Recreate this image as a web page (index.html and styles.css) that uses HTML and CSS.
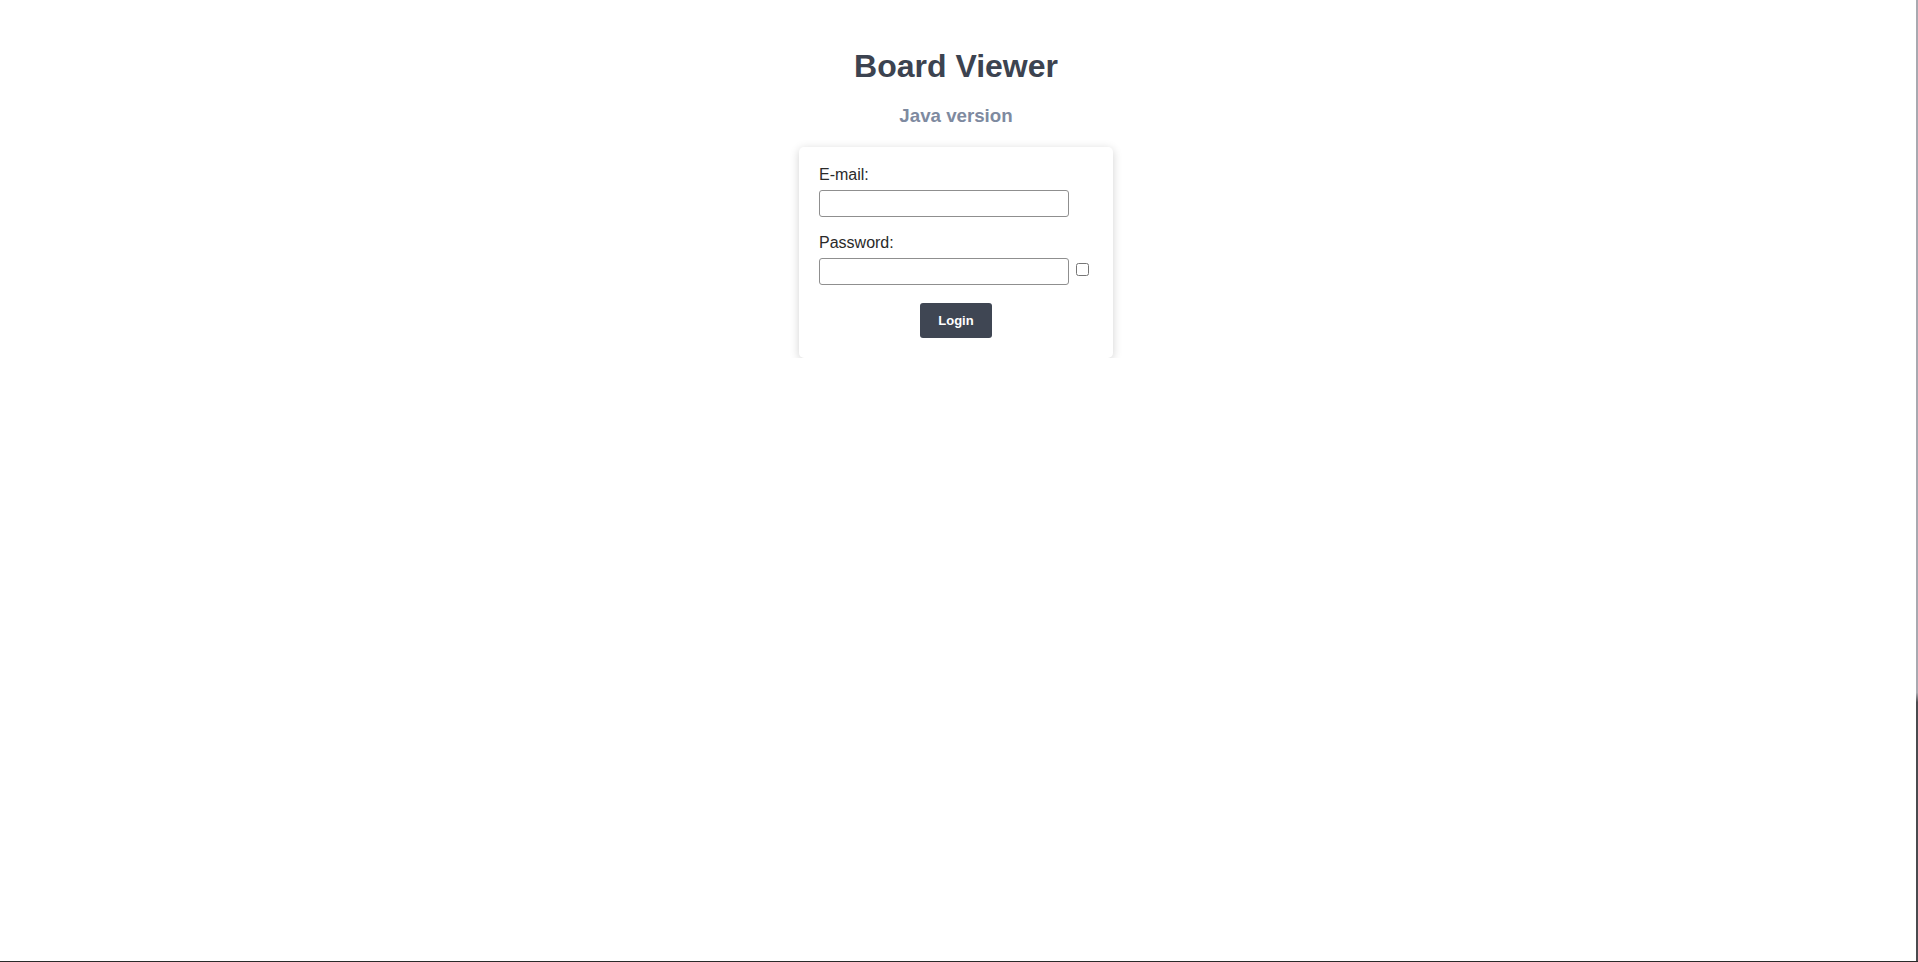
FILE: index.html
```html
<!DOCTYPE html>
<html lang="en">
<head>
<meta charset="utf-8">
<title>Board Viewer</title>
<link rel="stylesheet" href="styles.css">
</head>
<body>
<main class="page">
  <h1 class="title">Board Viewer</h1>
  <h3 class="subtitle">Java version</h3>
  <form class="card">
    <label class="label" for="email">E-mail:</label>
    <div class="row">
      <input class="field" id="email" type="text">
    </div>
    <label class="label label-gap" for="password">Password:</label>
    <div class="row">
      <input class="field" id="password" type="password">
      <input class="check" type="checkbox">
    </div>
    <div class="actions">
      <button class="btn" type="button">Login</button>
    </div>
  </form>
</main>
<div class="edge-right"></div>
<div class="edge-bottom"></div>
</body>
</html>
```
FILE: styles.css
```css
html, body {
  margin: 0;
  padding: 0;
  background: #ffffff;
}
body {
  font-family: "Liberation Sans", Arial, sans-serif;
  padding: 0 14px 0 8px;
}
.page {
  display: flex;
  flex-direction: column;
  align-items: center;
  padding-top: 48px;
}
.title {
  margin: 0;
  font-size: 32px;
  line-height: 36px;
  font-weight: bold;
  color: #3c4350;
}
.subtitle {
  margin: 21px 0 0;
  font-size: 18.72px;
  line-height: 21px;
  font-weight: bold;
  color: #7e8aa0;
}
.card {
  margin-top: 21px;
  width: 314px;
  box-sizing: border-box;
  padding: 19px 20px 20px;
  background: #fff;
  border-radius: 5px;
  box-shadow: 0 2px 10px rgba(0, 0, 0, 0.18);
  display: flex;
  flex-direction: column;
}
.label {
  display: block;
  font-size: 16px;
  line-height: 18px;
  color: #2a2a2a;
}
.label-gap {
  margin-top: 17px;
}
.row {
  margin-top: 6px;
  display: flex;
  align-items: center;
}
.field {
  width: 250px;
  height: 27px;
  box-sizing: border-box;
  margin: 0;
  border: 1px solid #8f8f8f;
  border-radius: 3px;
  padding: 2px 4px;
  font-family: inherit;
  font-size: 14px;
  background: #fff;
}
.check {
  width: 13px;
  height: 13px;
  margin: 0 0 4px 7px;
}
.actions {
  margin-top: 18px;
  display: flex;
  justify-content: center;
}
.btn {
  width: 72px;
  height: 35px;
  border: none;
  border-radius: 3px;
  background: #3f4653;
  color: #ffffff;
  font-family: inherit;
  font-size: 13px;
  font-weight: bold;
  padding: 0;
}
.edge-right {
  position: fixed;
  top: 0;
  right: 0;
  width: 2px;
  height: 962px;
  background: linear-gradient(#a9a9b0 0, #a9a9b0 72%, #4a4a4e 73%, #4a4a4e 100%);
}
.edge-bottom {
  position: fixed;
  left: 0;
  bottom: 0;
  width: 100%;
  height: 1px;
  background: #2a2a2a;
}
```
